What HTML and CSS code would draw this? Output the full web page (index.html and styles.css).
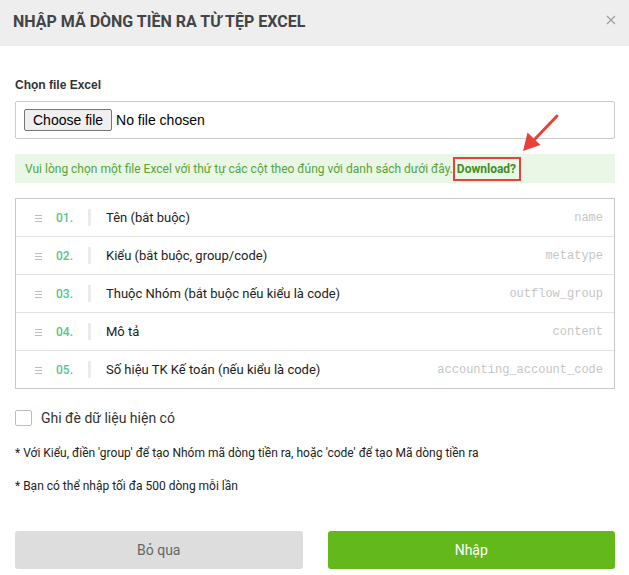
FILE: index.html
```html
<!DOCTYPE html>
<html lang="vi">
<head>
<meta charset="utf-8">
<title>Nhập mã dòng tiền ra</title>
<link rel="stylesheet" href="styles.css">
</head>
<body>
<div class="modal">
  <div class="modal-header">
    <h2 class="title">NHẬP MÃ DÒNG TIỀN RA TỪ TỆP EXCEL</h2>
    <button class="close" type="button" aria-label="Đóng">
      <svg width="10" height="10" viewBox="0 0 10 10"><path d="M1 1L9 9M9 1L1 9" stroke="#9e9e9e" stroke-width="1.2" fill="none"/></svg>
    </button>
  </div>
  <div class="modal-body">
    <label class="field-label" for="excel-file">Chọn file Excel</label>
    <div class="file-box">
      <label class="file-btn">Choose file<input id="excel-file" type="file" class="file-input"></label>
      <span class="file-status">No file chosen</span>
    </div>
    <div class="alert">Vui lòng chọn một file Excel với thứ tự các cột theo đúng với danh sách dưới đây.<a class="dl" href="#">Download?</a></div>
    <svg class="arrow" width="50" height="50" viewBox="0 0 50 50">
      <line x1="42" y1="6" x2="20" y2="29" stroke="#e8413a" stroke-width="3" stroke-linecap="round"/>
      <polygon points="8,41 12.5,22.5 25.5,35" fill="#e8413a"/>
    </svg>
    <ul class="cols">
      <li class="col-row"><span class="drag"><i></i><i></i><i></i></span><span class="num">01.</span><span class="sep"></span><span class="name">Tên (bắt buộc)</span><span class="key">name</span></li>
      <li class="col-row"><span class="drag"><i></i><i></i><i></i></span><span class="num">02.</span><span class="sep"></span><span class="name">Kiểu (bắt buộc, group/code)</span><span class="key">metatype</span></li>
      <li class="col-row"><span class="drag"><i></i><i></i><i></i></span><span class="num">03.</span><span class="sep"></span><span class="name">Thuộc Nhóm (bắt buộc nếu kiểu là code)</span><span class="key">outflow_group</span></li>
      <li class="col-row"><span class="drag"><i></i><i></i><i></i></span><span class="num">04.</span><span class="sep"></span><span class="name">Mô tả</span><span class="key">content</span></li>
      <li class="col-row"><span class="drag"><i></i><i></i><i></i></span><span class="num">05.</span><span class="sep"></span><span class="name">Số hiệu TK Kế toán (nếu kiểu là code)</span><span class="key">accounting_account_code</span></li>
    </ul>
    <label class="check"><span class="box"></span><span>Ghi đè dữ liệu hiện có</span></label>
    <p class="note">* Với Kiểu, điền 'group' để tạo Nhóm mã dòng tiền ra, hoặc 'code' để tạo Mã dòng tiền ra</p>
    <p class="note note-2">* Bạn có thể nhập tối đa 500 dòng mỗi lần</p>
    <div class="actions">
      <button class="btn btn-cancel" type="button">Bỏ qua</button>
      <button class="btn btn-primary" type="button">Nhập</button>
    </div>
  </div>
</div>
</body>
</html>
```

FILE: styles.css
```css
* { box-sizing: border-box; }
html, body { margin: 0; padding: 0; background: #fff; }
body { font-family: Roboto, "Noto Sans", sans-serif; color: #333; width: 629px; }

.modal { position: relative; width: 629px; }

.modal-header {
  height: 46px;
  background: #eeeeee;
  display: flex;
  align-items: flex-start;
  justify-content: space-between;
  padding: 12px 0 0 13px;
}
.title {
  margin: 0;
  font-size: 16px;
  line-height: 20px;
  font-weight: 700;
  color: #444;
}
.close {
  border: 0;
  background: transparent;
  padding: 0;
  margin: 3px 13px 0 0;
  width: 10px;
  height: 10px;
  display: flex;
}

.modal-body { padding: 31px 14px 0 15px; }

.field-label {
  display: block;
  font-family: "Liberation Sans", Arial, sans-serif;
  font-weight: 700;
  font-size: 12px;
  line-height: 16px;
  color: #333;
}
.file-box {
  margin-top: 8px;
  height: 38px;
  border: 1px solid #cccccc;
  border-radius: 2px;
  display: flex;
  align-items: center;
  padding: 0 8px;
  font-family: "Liberation Sans", Arial, sans-serif;
  font-size: 14px;
  color: #000;
}
.file-btn {
  display: inline-flex;
  align-items: center;
  height: 22px;
  padding: 0 8px;
  background: #efefef;
  border: 1px solid #767676;
  border-radius: 2px;
  color: #000;
}
.file-input { display: none; }
.file-status { margin-left: 4px; }

.alert {
  margin-top: 15px;
  height: 29px;
  background: #eaf6e6;
  color: #55a53a;
  font-size: 12px;
  display: flex;
  align-items: center;
  padding: 0 10px;
  white-space: nowrap;
}
.dl {
  display: inline-block;
  border: 2px solid #e8413a;
  padding: 2px 3px 2px 2px;
  line-height: 16px;
  font-weight: 700;
  color: #3f8f24;
  text-decoration: none;
  margin-left: 0;
}
.arrow { position: absolute; left: 515px; top: 110px; }

.cols {
  list-style: none;
  margin: 15px 0 0;
  padding: 0;
  border: 1px solid #c8c8c8;
}
.col-row {
  height: 38px;
  border-top: 1px solid #e2e2e2;
  display: flex;
  align-items: center;
  padding: 0 11px 0 19px;
}
.col-row:first-child { height: 37px; border-top: 0; }
.drag {
  width: 7px;
  display: flex;
  flex-direction: column;
  gap: 2px;
  margin-top: 1px;
}
.drag i { display: block; height: 1px; background: #bdbdbd; }
.num {
  margin-left: 14px;
  width: 32px;
  font-size: 12px;
  font-weight: 500;
  color: #55c68a;
}
.sep { width: 3px; height: 17px; background: #ebebeb; }
.name { margin-left: 15px; font-size: 13px; color: #222; flex: 1; }
.key {
  font-family: "Liberation Mono", "Courier New", monospace;
  font-size: 12px;
  color: #c6c6c6;
}

.check {
  margin-top: 21px;
  display: flex;
  align-items: center;
  height: 16px;
  font-size: 14px;
  color: #333;
}
.box {
  width: 17px;
  height: 16px;
  border: 1px solid #bdbdbd;
  border-radius: 2px;
  margin-right: 9px;
}
.note {
  margin: 19px 0 0;
  font-size: 12px;
  line-height: 16px;
  color: #222;
}
.note-2 { margin-top: 17px; }

.actions {
  margin-top: 37px;
  display: grid;
  grid-template-columns: 1fr 1fr;
  gap: 25px;
}
.btn {
  height: 38px;
  border: 0;
  border-radius: 3px;
  font-family: Roboto, sans-serif;
  font-size: 14px;
}
.btn-cancel { background: #dddddd; color: #666; }
.btn-primary { background: #63b81b; color: #fff; }
```
